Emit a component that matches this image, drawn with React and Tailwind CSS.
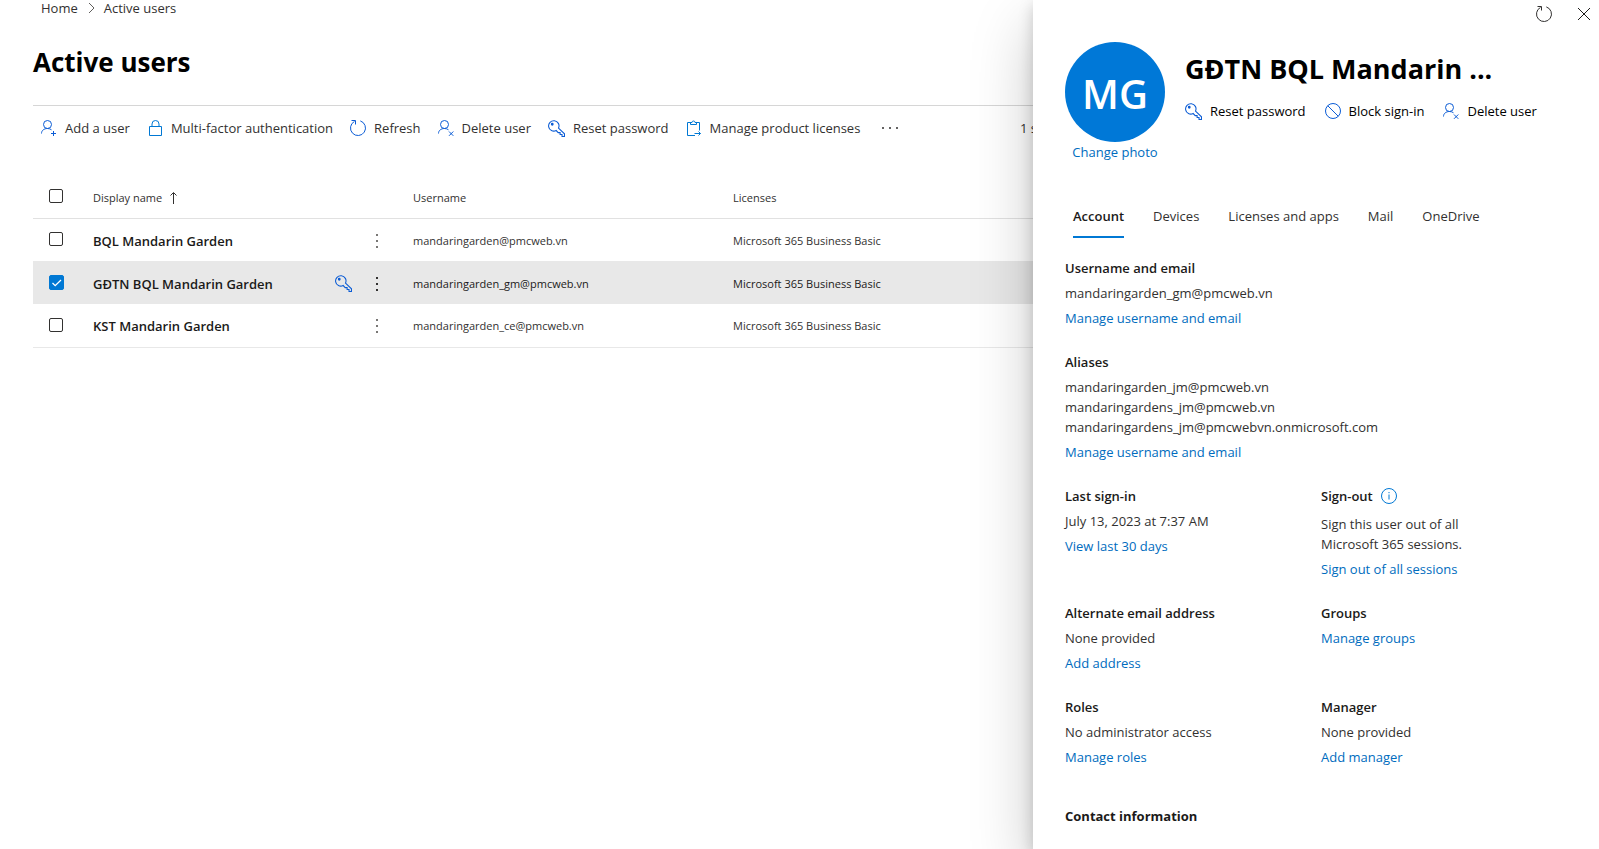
const S = ({ children, className = "size-4 text-[#0b5cd5]", vb = "0 0 16 16" }) => (
  <svg viewBox={vb} className={"shrink-0 " + className} fill="none" stroke="currentColor" strokeWidth="1" aria-hidden="true">
    {children}
  </svg>
);

const Person = () => (
  <>
    <circle cx="6.5" cy="4.5" r="4" />
    <path d="M.5 13.5C.5 10.500 3 8.500 6.500 8.500c1.600 0 3 .5 4 1.300" />
  </>
);
const AddUser = () => (<S><Person /><path d="M12.500 11v5M10 13.500h5" /></S>);
const DeleteUser = () => (<S><Person /><path d="M11 11.500l4.300 4.300M15.300 11.500L11 15.800" /></S>);
const Lock = () => (
  <S className="size-4 text-[#0078d4]"><path d="M2.500 6.500h12v9h-12zM5 6.500V4a3.500 3.500 0 0 1 7 0v2.500" /></S>
);
const Refresh = ({ className }) => (
  <S className={className}><path d="M10.300 .9A7.500 7.500 0 1 1 4.500 1.400M1.500 .5h4v4" /></S>
);
const Key = () => (
  <S className="size-[17px] text-[#0b5cd5]">
    <path d="M9.900 7.600l5.600 5.400v2.500h-2.300v-1.800h-1.800v-1.800H9.600L7.700 9.900A4.900 4.900 0 1 1 9.900 7.600z" />
    <circle cx="4" cy="4" r=".8" fill="currentColor" />
  </S>
);
const Clipboard = () => (
  <S className="size-4 text-[#0078d4]">
    <path d="M5 2.500H1.500v13H9M10 2.500h3.500v8M4.500 4.500v-2H6a1.500 1.500 0 0 1 3 0h1.500v2zM8.500 13.500h6M12.500 11.500l2 2-2 2" />
  </S>
);
const Block = () => (<S><circle cx="8" cy="8" r="7.500" /><path d="M2.700 2.700l10.600 10.600" /></S>);

const commands = [
  ["Add a user", AddUser],
  ["Multi-factor authentication", Lock],
  ["Refresh", Refresh],
  ["Delete user", DeleteUser],
  ["Reset password", Key],
  ["Manage product licenses", Clipboard],
];

const users = [
  { name: "BQL Mandarin Garden", mail: "mandaringarden@pmcweb.vn" },
  { name: "GĐTN BQL Mandarin Garden", mail: "mandaringarden_gm@pmcweb.vn", selected: true },
  { name: "KST Mandarin Garden", mail: "mandaringarden_ce@pmcweb.vn" },
];

const Check = ({ label, checked }) => (
  <div className="relative size-[15px]">
    <input
      type="checkbox"
      aria-label={label}
      defaultChecked={checked}
      className="peer block size-[14px] appearance-none rounded-[2px] border border-[#323130] bg-white checked:size-[15px] checked:border-[#0078d4] checked:bg-[#0078d4]"
    />
    <svg viewBox="0 0 15 15" className="pointer-events-none absolute inset-0 hidden size-[15px] peer-checked:block" fill="none" stroke="white" strokeWidth="1.300" aria-hidden="true">
      <path d="M3.500 8l2.700 2.700L12 5" />
    </svg>
  </div>
);

const A = ({ children }) => (
  <a href="#" className="block text-[#006cbe]">{children}</a>
);

const Field = ({ title, lines = [], link, info }) => (
  <section className="flex flex-col gap-[5px]">
    <div className="flex items-center gap-2">
      <h3 className="font-semibold text-[#1b1a19]">{title}</h3>
      {info && (
        <button type="button" aria-label="About sign-out" className="text-[#0078d4]">
          <S className="size-4">
            <circle cx="8" cy="8" r="7.500" />
            <path d="M8 6.500v5M8 4v1.200" />
          </S>
        </button>
      )}
    </div>
    {lines.length > 0 && (
      <div className={info ? "pt-[3px]" : ""}>
        {lines.map((l) => (<p key={l}>{l}</p>))}
      </div>
    )}
    <A>{link}</A>
  </section>
);

const tabs = ["Account", "Devices", "Licenses and apps", "Mail", "OneDrive"];

export default function App() {
  return (
    <div className="relative min-h-screen overflow-hidden bg-white font-['Open_Sans',sans-serif] text-[13px] leading-5 text-[#323130]">
      <main className="pl-[33px]">
        <nav aria-label="Breadcrumb" className="flex h-[18px] items-center gap-2 px-2 pb-0.5">
          <a href="#">Home</a>
          <S className="size-[10px] text-[#605e5c]" vb="0 0 10 10"><path d="M3 0l5 5-5 5" /></S>
          <a href="#">Active users</a>
        </nav>
        <h1 className="mt-6 text-[26px] leading-10 font-bold text-black">Active users</h1>
        <div className="mt-[23px] flex h-[45px] items-center border-t border-[#d6d6d6] pl-2 whitespace-nowrap">
          <div className="flex items-center gap-[17px]">
            {commands.map(([label, Icon]) => (
              <button key={label} type="button" className="flex items-center gap-2">
                <Icon />
                <span>{label}</span>
              </button>
            ))}
            <button type="button" aria-label="More commands" className="px-1">
              <S className="h-4 w-[18px]" vb="0 0 18 16">
                <path d="M1 8h2M8 8h2M15 8h2" strokeWidth="1.500" />
              </S>
            </button>
          </div>
          <div className="ml-auto w-[579px]">1 selected</div>
        </div>
        <table className="mt-[25px] w-full table-fixed text-left text-[11px]">
          <colgroup>
            <col className="w-[60px]" />
            <col className="w-[320px]" />
            <col className="w-[320px]" />
            <col />
          </colgroup>
          <thead>
            <tr className="h-[43px] border-b border-[#e1e1e1] align-middle">
              <th className="pl-4 font-normal"><Check label="Select all users" /></th>
              <th className="pt-1 font-normal">
                <button type="button" className="flex items-center gap-2">
                  Display name
                  <S className="h-3 w-[7px]" vb="0 0 7 12"><path d="M3.500 12V1M.5 3.500l3-3 3 3" /></S>
                </button>
              </th>
              <th className="pt-1 font-normal">Username</th>
              <th className="pt-1 font-normal">Licenses</th>
            </tr>
          </thead>
          <tbody>
            {users.map((u) => (
              <tr key={u.mail} className={"h-[43px] " + (u.selected ? "bg-[#e8e8e8] text-[#1b1a19]" : "border-b border-[#e8e8e8]")}>
                <td className="pl-4"><Check label={"Select " + u.name} checked={u.selected} /></td>
                <td className="pt-0.5">
                  <div className="flex items-center pr-[35px]">
                    <span className="grow text-[13px] font-semibold text-[#1b1a19]">{u.name}</span>
                    {u.selected && (
                      <button type="button" aria-label="Reset password" className="mr-6"><Key /></button>
                    )}
                    <button type="button" aria-label={"More actions for " + u.name} className={u.selected ? "text-[#323130]" : "text-[#797775]"}>
                      <S className="h-4 w-[2px]" vb="0 0 2 16">
                        <path d="M1 1v2M1 7v2M1 13v2" strokeWidth="2" />
                      </S>
                    </button>
                  </div>
                </td>
                <td className="pt-0.5">{u.mail}</td>
                <td className="pt-0.5">Microsoft 365 Business Basic</td>
              </tr>
            ))}
          </tbody>
        </table>
      </main>

      <aside className="absolute inset-y-0 right-0 w-[566px] overflow-hidden bg-white px-8 shadow-[0_26px_58px_0_rgba(0,0,0,0.22),0_5px_14px_0_rgba(0,0,0,0.18)]">
        <div className="-mr-[25px] flex h-[42px] items-start justify-end gap-6 pt-1.5">
          <button type="button" aria-label="Refresh"><Refresh className="size-4 text-[#323130]" /></button>
          <button type="button" aria-label="Close">
            <S className="size-4 text-[#1b1a19]"><path d="M2 2l12 12M14 2L2 14" /></S>
          </button>
        </div>
        <header className="flex gap-5">
          <div className="flex w-[100px] flex-col items-center whitespace-nowrap">
            <div className="flex size-[100px] items-center justify-center rounded-full bg-[#0078d7] pt-1 text-[40px] font-semibold text-white">MG</div>
            <A>Change photo</A>
          </div>
          <div className="pt-[7px]">
            <h2 className="text-[27px] leading-10 font-bold whitespace-nowrap text-black">GĐTN BQL Mandarin ...</h2>
            <div className="mt-3 flex gap-[19px] whitespace-nowrap font-medium text-black">
              {[["Reset password", Key], ["Block sign-in", Block], ["Delete user", DeleteUser]].map(([label, Icon]) => (
                <button key={label} type="button" className="flex items-center gap-2">
                  <Icon />
                  <span>{label}</span>
                </button>
              ))}
            </div>
          </div>
        </header>
        <div role="tablist" className="mt-11 flex gap-[29px] pl-2">
          {tabs.map((t, i) => (
            <button key={t} type="button" role="tab" aria-selected={i === 0}
              className={"h-[32px] border-b-2 pb-2.5 " + (i === 0 ? "border-[#0078d4] font-semibold text-[#1b1a19]" : "border-transparent")}>
              {t}
            </button>
          ))}
        </div>
        <div className="mt-5 flex flex-col gap-6">
          <Field title="Username and email" lines={["mandaringarden_gm@pmcweb.vn"]} link="Manage username and email" />
          <Field title="Aliases" lines={["mandaringarden_jm@pmcweb.vn", "mandaringardens_jm@pmcweb.vn", "mandaringardens_jm@pmcwebvn.onmicrosoft.com"]} link="Manage username and email" />
          <div className="grid grid-cols-[256px_160px] gap-y-6">
            <Field title="Last sign-in" lines={["July 13, 2023 at 7:37 AM"]} link="View last 30 days" />
            <Field title="Sign-out" info lines={["Sign this user out of all", "Microsoft 365 sessions."]} link="Sign out of all sessions" />
            <Field title="Alternate email address" lines={["None provided"]} link="Add address" />
            <Field title="Groups" link="Manage groups" />
            <Field title="Roles" lines={["No administrator access"]} link="Manage roles" />
            <Field title="Manager" lines={["None provided"]} link="Add manager" />
          </div>
          <h3 className="mt-[15px] font-bold text-[#1b1a19]">Contact information</h3>
        </div>
      </aside>
    </div>
  );
}
